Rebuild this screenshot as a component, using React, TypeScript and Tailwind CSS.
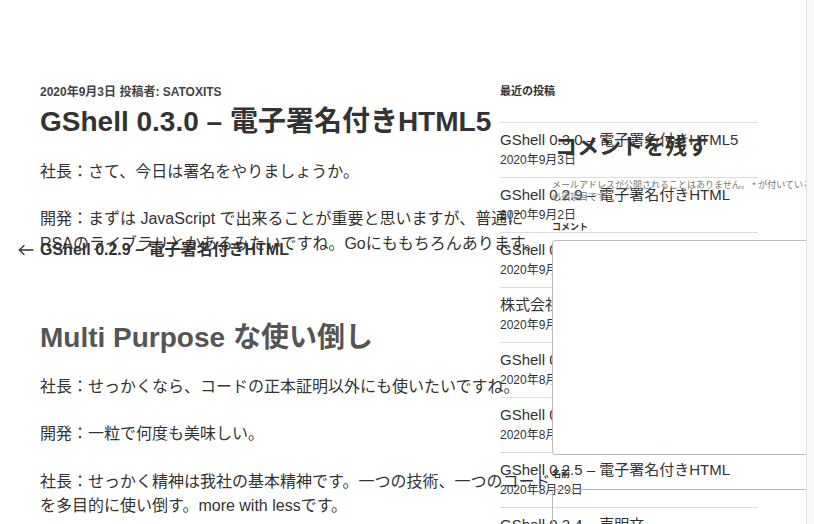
import React from "react";

const posts = [
  { t: "GShell 0.3.0 – 電子署名付きHTML5", d: "2020年9月3日" },
  { t: "GShell 0.2.9 – 電子署名付きHTML", d: "2020年9月2日" },
  { t: "GShell 0.2.8 – 電子署名付きHTML", d: "2020年9月1日" },
  { t: "株式会社ITSについて", d: "2020年9月1日" },
  { t: "GShell 0.2.7 – 電子署名付きHTML", d: "2020年8月31日" },
  { t: "GShell 0.2.6 – 電子署名付きHTML", d: "2020年8月30日" },
  { t: "GShell 0.2.5 – 電子署名付きHTML", d: "2020年8月29日" },
  { t: "GShell 0.2.4 – 声明文", d: "2020年8月28日" },
];

export default function App() {
  return (
    <div className="relative w-[814px] h-[524px] overflow-hidden bg-white text-[#333] font-['Liberation_Sans','Noto_Sans_CJK_JP',sans-serif]">
      {/* main article */}
      <article className="absolute left-[40px] top-[84px] w-[500px]">
        <div className="text-[12px] leading-[16px] font-bold text-[#444] whitespace-nowrap">
          2020年9月3日 投稿者: SATOXITS
        </div>
        <h1 className="mt-[5px] text-[28px] leading-[34px] font-bold text-[#333] whitespace-nowrap">
          GShell 0.3.0 – 電子署名付きHTML5
        </h1>
        <p className="mt-[20.75px] text-[16px] leading-[24.5px] whitespace-nowrap">
          社長：さて、今日は署名をやりましょうか。
        </p>
        <p className="mt-[23px] text-[16px] leading-[24.5px] whitespace-nowrap">
          開発：まずは JavaScript で出来ることが重要と思いますが、普通に
          <br />
          RSAのライブラリとかあるみたいですね。Goにももちろんあります。
        </p>
        <h2 className="mt-[64.75px] text-[28px] leading-[34px] font-bold text-[#555] whitespace-nowrap">
          Multi Purpose な使い倒し
        </h2>
        <p className="mt-[19.75px] text-[16px] leading-[24.5px] whitespace-nowrap">
          社長：せっかくなら、コードの正本証明以外にも使いたいですね。
        </p>
        <p className="mt-[23px] text-[16px] leading-[24.5px] whitespace-nowrap">
          開発：一粒で何度も美味しい。
        </p>
        <p className="mt-[23px] text-[16px] leading-[24.5px] whitespace-nowrap">
          社長：せっかく精神は我社の基本精神です。一つの技術、一つのコード
          <br />
          を多目的に使い倒す。more with lessです。
        </p>
      </article>

      {/* post navigation */}
      <div className="absolute left-[18px] top-[238px] flex items-center gap-[6px] h-[24px] text-[16px] font-bold text-[#333] whitespace-nowrap">
        <svg width="16" height="12" viewBox="0 0 16 12" fill="none" stroke="#333" strokeWidth="1.3" strokeLinecap="round" strokeLinejoin="round">
          <path d="M15 6H1.5" />
          <path d="M6 1.5L1.5 6L6 10.5" />
        </svg>
        <span>GShell 0.2.9 – 電子署名付きHTML</span>
      </div>

      {/* sidebar */}
      <aside className="absolute left-[500px] top-[83px] w-[258px]">
        <div className="text-[11px] leading-[16px] font-bold text-[#333]">最近の投稿</div>
        <ul className="mt-[23px]">
          {posts.map((p) => (
            <li key={p.t + p.d} className="border-t border-[#dcdcdc] pt-[7px] pb-[9px]">
              <div className="text-[15px] leading-[20px] text-[#333] whitespace-nowrap">{p.t}</div>
              <div className="mt-[2px] text-[12px] leading-[16px] text-[#333] whitespace-nowrap">{p.d}</div>
            </li>
          ))}
        </ul>
      </aside>

      {/* comment form */}
      <section className="absolute left-[552px] top-[133px] w-[290px]">
        <h3 className="pl-[3px] text-[22px] leading-[28px] font-bold text-[#333] whitespace-nowrap">
          コメントを残す
        </h3>
        <p className="mt-[18px] text-[9px] leading-[12px] text-[#767676] whitespace-nowrap">
          メールアドレスが公開されることはありません。 * が付いている欄は
          <br />
          必須項目です
        </p>
        <div className="mt-[18px] text-[9px] leading-[12px] font-bold text-[#333]">コメント</div>
        <div className="mt-[7px] h-[215px] rounded-[3px] border border-[#bbb] bg-white" />
        <div className="mt-[13px] text-[9px] leading-[12px] font-bold text-[#333]">名前</div>
        <div className="mt-[9px] h-[40px] rounded-[3px] border border-[#bbb]" />
      </section>

      {/* scrollbar track */}
      <div className="absolute right-0 top-0 h-full w-[8px] bg-[#f8f8f8] border-l border-[#e4e4e4]" />
    </div>
  );
}
